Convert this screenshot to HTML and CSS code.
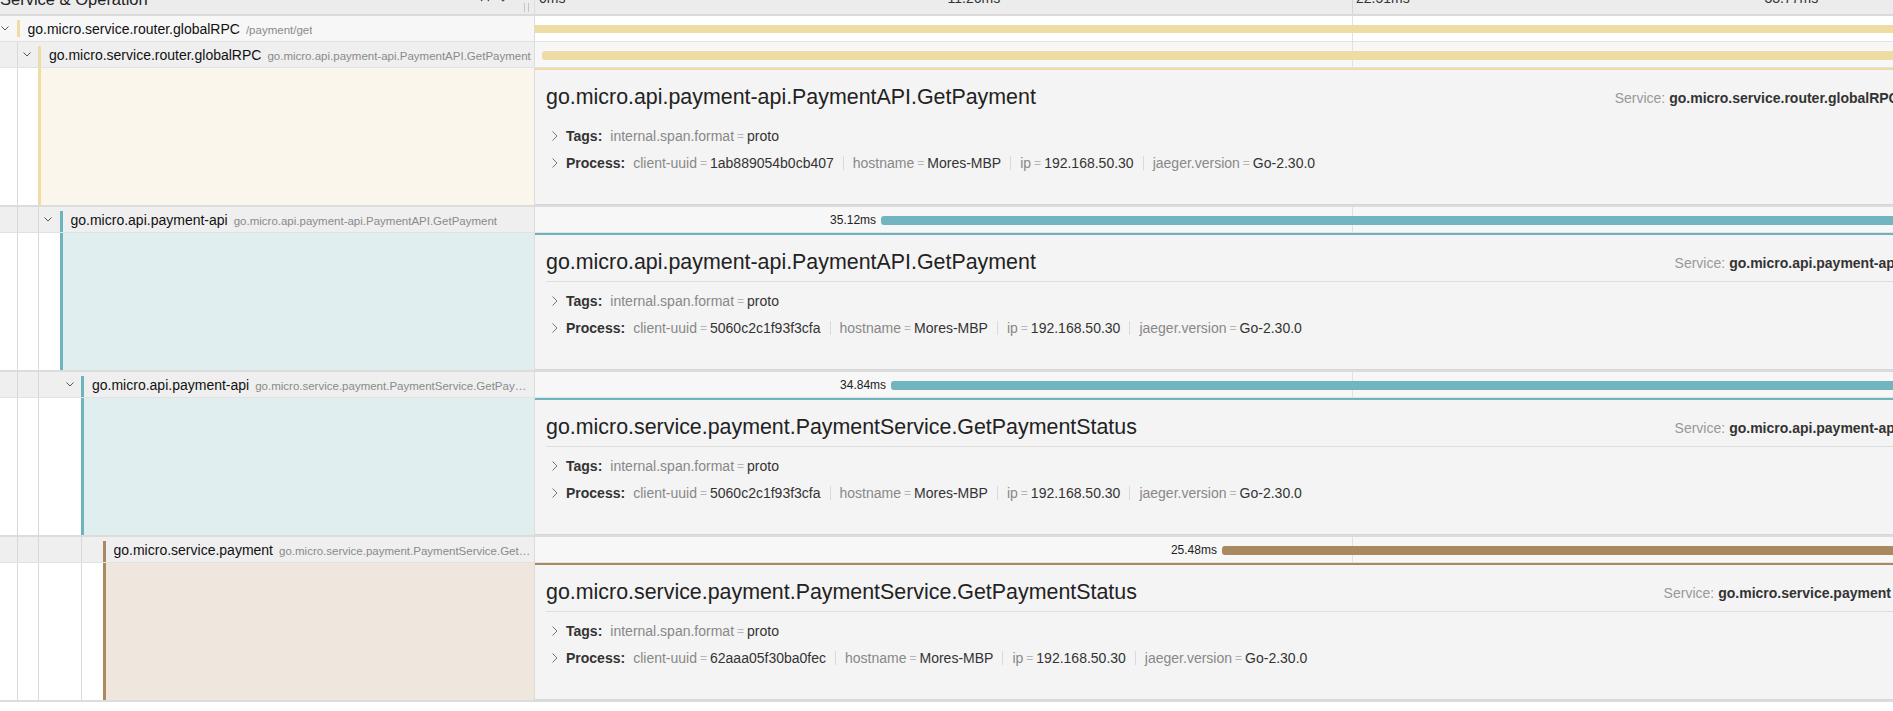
FILE: index.html
```html
<!DOCTYPE html>
<html lang="en">
<head>
<meta charset="utf-8">
<title>Trace detail</title>
<link rel="stylesheet" href="styles.css">
</head>
<body>
<div class="page">
  <div class="hdr">
    <div class="hdr-name">
      <span class="hdr-title">Service &amp; Operation</span>
      <span class="hdr-tools">
        <svg class="tool" width="10" height="12" viewBox="0 0 10 12"><path d="M1 8 L5 4 L9 8"/></svg>
        <svg class="tool" width="10" height="12" viewBox="0 0 10 12"><path d="M1 4 L5 8 L9 4"/></svg>
        <svg class="tool" width="10" height="12" viewBox="0 0 10 12"><path d="M1 6 L5 2 L9 6 M1 10 L5 6 L9 10"/></svg>
        <svg class="tool" width="10" height="12" viewBox="0 0 10 12"><path d="M1 2 L5 6 L9 2 M1 6 L5 10 L9 6"/></svg>
      </span>
      <span class="resizer"></span>
    </div>
    <div class="hdr-time">
      <span class="grid-line"></span>
      <span class="tick" style="left:0%">0ms</span>
      <span class="tick" style="left:25%">11.26ms</span>
      <span class="tick" style="left:50%">22.51ms</span>
      <span class="tick" style="left:75%">33.77ms</span>
    </div>
  </div>

  <!-- row 1 -->
  <div class="row span-row is-collapsed">
    <div class="name-cell">
      <span class="toggle"><svg class="chev" width="8" height="5" viewBox="0 0 8 5"><path d="M0.5 0.5 L4 4 L7.5 0.5"/></svg></span>
      <span class="svc c-yellow"><span class="label"><span class="svc-name">go.micro.service.router.globalRPC</span><span class="op">/payment/get</span></span></span>
    </div>
    <div class="bar-cell">
      <span class="grid-line"></span>
      <span class="bar b-yellow bar--flat" style="left:0%;width:100%"></span>
    </div>
  </div>

  <!-- row 2 -->
  <div class="row span-row">
    <div class="name-cell">
      <span class="guide on"></span>
      <span class="toggle"><svg class="chev" width="8" height="5" viewBox="0 0 8 5"><path d="M0.5 0.5 L4 4 L7.5 0.5"/></svg></span>
      <span class="svc c-yellow"><span class="label"><span class="svc-name">go.micro.service.router.globalRPC</span><span class="op">go.micro.api.payment-api.PaymentAPI.GetPayment</span></span></span>
    </div>
    <div class="bar-cell">
      <span class="grid-line"></span>
      <span class="bar b-yellow" style="left:0.43%;width:99.5%"></span>
    </div>
  </div>

  <!-- detail 1 -->
  <div class="row detail-row">
    <div class="name-cell">
      <span class="guide on"></span>
      <span class="accent-spacer"></span>
      <span class="accent-box box-yellow"></span>
    </div>
    <div class="detail-cell">
      <div class="detail-info top-yellow detail-info--plain">
        <div class="detail-head">
          <h2>go.micro.api.payment-api.PaymentAPI.GetPayment</h2>
          <ul class="overview">
            <li><span class="ov-key">Service:</span> <span class="ov-val">go.micro.service.router.globalRPC</span></li>
            <li><span class="ov-key">Duration:</span> <span class="ov-val">44.83ms</span></li>
            <li><span class="ov-key">Start Time:</span> <span class="ov-val">0.19ms</span></li>
          </ul>
        </div>
        <div class="divider"></div>
        <div class="kv">
          <svg class="kv-chev" width="6" height="10" viewBox="0 0 6 10"><path d="M0.5 0.5 L5 5 L0.5 9.5"/></svg>
          <span class="kv-label">Tags:</span>
          <span class="kv-item"><span class="k">internal.span.format</span><span class="eq">=</span><span class="v">proto</span></span>
        </div>
        <div class="kv">
          <svg class="kv-chev" width="6" height="10" viewBox="0 0 6 10"><path d="M0.5 0.5 L5 5 L0.5 9.5"/></svg>
          <span class="kv-label">Process:</span>
          <span class="kv-item"><span class="k">client-uuid</span><span class="eq">=</span><span class="v">1ab889054b0cb407</span></span>
          <span class="kv-item"><span class="k">hostname</span><span class="eq">=</span><span class="v">Mores-MBP</span></span>
          <span class="kv-item"><span class="k">ip</span><span class="eq">=</span><span class="v">192.168.50.30</span></span>
          <span class="kv-item"><span class="k">jaeger.version</span><span class="eq">=</span><span class="v">Go-2.30.0</span></span>
        </div>
      </div>
    </div>
  </div>

  <!-- row 3 -->
  <div class="row span-row">
    <div class="name-cell">
      <span class="guide on"></span>
      <span class="guide on"></span>
      <span class="toggle"><svg class="chev" width="8" height="5" viewBox="0 0 8 5"><path d="M0.5 0.5 L4 4 L7.5 0.5"/></svg></span>
      <span class="svc c-teal"><span class="label"><span class="svc-name">go.micro.api.payment-api</span><span class="op">go.micro.api.payment-api.PaymentAPI.GetPayment</span></span></span>
    </div>
    <div class="bar-cell">
      <span class="grid-line"></span>
      <span class="dur" style="right:calc(78.82% + 5px)">35.12ms</span>
      <span class="bar b-teal" style="left:21.18%;width:78.0%"></span>
    </div>
  </div>

  <!-- detail 2 -->
  <div class="row detail-row">
    <div class="name-cell">
      <span class="guide on"></span>
      <span class="guide on"></span>
      <span class="accent-spacer"></span>
      <span class="accent-box box-teal"></span>
    </div>
    <div class="detail-cell">
      <div class="detail-info top-teal">
        <div class="detail-head">
          <h2>go.micro.api.payment-api.PaymentAPI.GetPayment</h2>
          <ul class="overview">
            <li><span class="ov-key">Service:</span> <span class="ov-val">go.micro.api.payment-api</span></li>
            <li><span class="ov-key">Duration:</span> <span class="ov-val">35.12ms</span></li>
            <li><span class="ov-key">Start Time:</span> <span class="ov-val">9.53ms</span></li>
          </ul>
        </div>
        <div class="divider"></div>
        <div class="kv">
          <svg class="kv-chev" width="6" height="10" viewBox="0 0 6 10"><path d="M0.5 0.5 L5 5 L0.5 9.5"/></svg>
          <span class="kv-label">Tags:</span>
          <span class="kv-item"><span class="k">internal.span.format</span><span class="eq">=</span><span class="v">proto</span></span>
        </div>
        <div class="kv">
          <svg class="kv-chev" width="6" height="10" viewBox="0 0 6 10"><path d="M0.5 0.5 L5 5 L0.5 9.5"/></svg>
          <span class="kv-label">Process:</span>
          <span class="kv-item"><span class="k">client-uuid</span><span class="eq">=</span><span class="v">5060c2c1f93f3cfa</span></span>
          <span class="kv-item"><span class="k">hostname</span><span class="eq">=</span><span class="v">Mores-MBP</span></span>
          <span class="kv-item"><span class="k">ip</span><span class="eq">=</span><span class="v">192.168.50.30</span></span>
          <span class="kv-item"><span class="k">jaeger.version</span><span class="eq">=</span><span class="v">Go-2.30.0</span></span>
        </div>
      </div>
    </div>
  </div>

  <!-- row 4 -->
  <div class="row span-row">
    <div class="name-cell">
      <span class="guide on"></span>
      <span class="guide on"></span>
      <span class="guide"></span>
      <span class="toggle"><svg class="chev" width="8" height="5" viewBox="0 0 8 5"><path d="M0.5 0.5 L4 4 L7.5 0.5"/></svg></span>
      <span class="svc c-teal"><span class="label"><span class="svc-name">go.micro.api.payment-api</span><span class="op">go.micro.service.payment.PaymentService.GetPaymentStatus</span></span></span>
    </div>
    <div class="bar-cell">
      <span class="grid-line"></span>
      <span class="dur" style="right:calc(78.21% + 5px)">34.84ms</span>
      <span class="bar b-teal" style="left:21.79%;width:77.4%"></span>
    </div>
  </div>

  <!-- detail 3 -->
  <div class="row detail-row">
    <div class="name-cell">
      <span class="guide on"></span>
      <span class="guide on"></span>
      <span class="guide"></span>
      <span class="accent-spacer"></span>
      <span class="accent-box box-teal"></span>
    </div>
    <div class="detail-cell">
      <div class="detail-info top-teal">
        <div class="detail-head">
          <h2>go.micro.service.payment.PaymentService.GetPaymentStatus</h2>
          <ul class="overview">
            <li><span class="ov-key">Service:</span> <span class="ov-val">go.micro.api.payment-api</span></li>
            <li><span class="ov-key">Duration:</span> <span class="ov-val">34.84ms</span></li>
            <li><span class="ov-key">Start Time:</span> <span class="ov-val">9.81ms</span></li>
          </ul>
        </div>
        <div class="divider"></div>
        <div class="kv">
          <svg class="kv-chev" width="6" height="10" viewBox="0 0 6 10"><path d="M0.5 0.5 L5 5 L0.5 9.5"/></svg>
          <span class="kv-label">Tags:</span>
          <span class="kv-item"><span class="k">internal.span.format</span><span class="eq">=</span><span class="v">proto</span></span>
        </div>
        <div class="kv">
          <svg class="kv-chev" width="6" height="10" viewBox="0 0 6 10"><path d="M0.5 0.5 L5 5 L0.5 9.5"/></svg>
          <span class="kv-label">Process:</span>
          <span class="kv-item"><span class="k">client-uuid</span><span class="eq">=</span><span class="v">5060c2c1f93f3cfa</span></span>
          <span class="kv-item"><span class="k">hostname</span><span class="eq">=</span><span class="v">Mores-MBP</span></span>
          <span class="kv-item"><span class="k">ip</span><span class="eq">=</span><span class="v">192.168.50.30</span></span>
          <span class="kv-item"><span class="k">jaeger.version</span><span class="eq">=</span><span class="v">Go-2.30.0</span></span>
        </div>
      </div>
    </div>
  </div>

  <!-- row 5 -->
  <div class="row span-row">
    <div class="name-cell">
      <span class="guide on"></span>
      <span class="guide on"></span>
      <span class="guide"></span>
      <span class="guide on"></span>
      <span class="toggle"></span>
      <span class="svc c-brown"><span class="label"><span class="svc-name">go.micro.service.payment</span><span class="op">go.micro.service.payment.PaymentService.GetPaymentStatus</span></span></span>
    </div>
    <div class="bar-cell">
      <span class="grid-line"></span>
      <span class="dur" style="right:calc(57.96% + 5px)">25.48ms</span>
      <span class="bar b-brown" style="left:42.04%;width:56.6%"></span>
    </div>
  </div>

  <!-- detail 4 -->
  <div class="row detail-row">
    <div class="name-cell">
      <span class="guide on"></span>
      <span class="guide on"></span>
      <span class="guide"></span>
      <span class="guide on"></span>
      <span class="accent-spacer"></span>
      <span class="accent-box box-brown"></span>
    </div>
    <div class="detail-cell">
      <div class="detail-info top-brown">
        <div class="detail-head">
          <h2>go.micro.service.payment.PaymentService.GetPaymentStatus</h2>
          <ul class="overview">
            <li><span class="ov-key">Service:</span> <span class="ov-val">go.micro.service.payment</span></li>
            <li><span class="ov-key">Duration:</span> <span class="ov-val">25.48ms</span></li>
            <li><span class="ov-key">Start Time:</span> <span class="ov-val">18.93ms</span></li>
          </ul>
        </div>
        <div class="divider"></div>
        <div class="kv">
          <svg class="kv-chev" width="6" height="10" viewBox="0 0 6 10"><path d="M0.5 0.5 L5 5 L0.5 9.5"/></svg>
          <span class="kv-label">Tags:</span>
          <span class="kv-item"><span class="k">internal.span.format</span><span class="eq">=</span><span class="v">proto</span></span>
        </div>
        <div class="kv">
          <svg class="kv-chev" width="6" height="10" viewBox="0 0 6 10"><path d="M0.5 0.5 L5 5 L0.5 9.5"/></svg>
          <span class="kv-label">Process:</span>
          <span class="kv-item"><span class="k">client-uuid</span><span class="eq">=</span><span class="v">62aaa05f30ba0fec</span></span>
          <span class="kv-item"><span class="k">hostname</span><span class="eq">=</span><span class="v">Mores-MBP</span></span>
          <span class="kv-item"><span class="k">ip</span><span class="eq">=</span><span class="v">192.168.50.30</span></span>
          <span class="kv-item"><span class="k">jaeger.version</span><span class="eq">=</span><span class="v">Go-2.30.0</span></span>
        </div>
      </div>
    </div>
  </div>
</div>
</body>
</html>
```

FILE: styles.css
```css
html, body {
  margin: 0;
  padding: 0;
  overflow: hidden;
  background: #fff;
}

.page {
  width: 2169px;
  font-family: "Liberation Sans", Arial, Helvetica, sans-serif;
  color: #222;
}

/* ---------- header ---------- */
.hdr {
  display: flex;
  height: 14px;
  background: #ececec;
  border-bottom: 2px solid #dadada;
  overflow: hidden;
}

.hdr-name {
  width: 535px;
  flex: none;
  position: relative;
  display: flex;
  box-sizing: border-box;
  border-right: 1px solid #dcdcdc;
}

.hdr-title {
  display: block;
  flex: 1;
  font-size: 16.5px;
  line-height: 16px;
  margin-top: -9px;
  color: #222;
}

.hdr-tools {
  display: flex;
  gap: 8px;
  margin-top: -9px;
  margin-right: 26px;
  height: 12px;
}

.tool path {
  fill: none;
  stroke: #555;
  stroke-width: 1.2;
}

.resizer {
  position: absolute;
  right: 5px;
  top: 3px;
  width: 3px;
  height: 9px;
  border-left: 1px solid #c4c4c4;
  border-right: 1px solid #c4c4c4;
}

.hdr-time {
  flex: 1;
  position: relative;
}

.tick {
  position: absolute;
  top: -9px;
  padding-left: 4px;
  font-size: 14px;
  line-height: 14px;
  color: #333;
  white-space: nowrap;
}

/* ---------- rows ---------- */
.row {
  display: flex;
  box-sizing: border-box;
}

.span-row {
  height: 26px;
  border-bottom: 1px solid #e2e2e2;
}

.detail-row {
  height: 139px;
  border-bottom: 2px solid #dcdcdc;
}

.name-cell {
  width: 535px;
  flex: none;
  display: flex;
  box-sizing: border-box;
  border-right: 1px solid #dcdcdc;
}

.span-row .name-cell {
  background: #efefef;
}

.span-row.is-collapsed .name-cell {
  background: #f7f7f7;
}

.detail-row .name-cell {
  background: #fff;
}

.guide {
  width: 21.5px;
  flex: none;
  display: flex;
}

.guide.on::before {
  content: "";
  width: 1px;
  margin-left: 16.5px;
  background: #d9d9d9;
}

.toggle {
  width: 16.5px;
  flex: none;
  display: flex;
  align-items: center;
  padding-left: 1px;
  box-sizing: border-box;
}

.chev path {
  fill: none;
  stroke: #555;
  stroke-width: 1;
}

.svc {
  flex: 1;
  min-width: 0;
  display: flex;
  align-items: center;
  border-left: 3px solid;
  margin-top: 4px;
  padding: 0 2px 4px 8px;
}

.is-collapsed .svc {
  margin-bottom: 4px;
  padding-bottom: 0;
}

.label {
  overflow: hidden;
  white-space: nowrap;
  text-overflow: ellipsis;
  color: #888;
  font-size: 11.5px;
}

.svc-name {
  font-size: 14px;
  color: #111;
}

.op {
  font-size: 11.5px;
  color: #8a8a8a;
  margin-left: 6px;
}

.c-yellow { border-color: #efdba3; }
.c-teal { border-color: #6db4bd; }
.c-brown { border-color: #a98a60; }

/* timeline */
.bar-cell {
  flex: 1;
  position: relative;
  background: #f7f7f7;
}

.is-collapsed .bar-cell {
  background: #fff;
}

.grid-line {
  position: absolute;
  left: 50%;
  top: 0;
  bottom: 0;
  width: 1px;
  background: #e2e2e2;
}

.hdr-time .grid-line {
  background: #d6d6d6;
}

.bar {
  position: absolute;
  top: 9px;
  height: 9px;
  border-radius: 3px;
}

.bar--flat {
  border-radius: 0;
  top: 9px;
  height: 8px;
}

.b-yellow { background: #efdca5; }
.b-teal { background: #70b5bf; }
.b-brown { background: #ab8960; }

.dur {
  position: absolute;
  top: 0;
  line-height: 26px;
  font-size: 12px;
  color: #222;
  white-space: nowrap;
}

/* ---------- detail ---------- */
.accent-spacer {
  width: 16.5px;
  flex: none;
}

.accent-box {
  flex: 1;
  border-left: 3px solid transparent;
}

.accent-box.box-yellow { border-left-color: #efdba3; background: #fbf6eb; }
.accent-box.box-teal { border-left-color: #6db4bd; background: #e1eef0; }
.accent-box.box-brown { border-left-color: #a98a60; background: #efe6dd; }

.detail-cell {
  flex: 1;
  display: flex;
}

.detail-info {
  flex: 1;
  background: #f4f4f4;
  border-top: 2px solid;
  border-bottom: 1px solid #d6d6d6;
  padding: 12px 1px 0 11px;
}

.top-yellow { border-top-color: #efdba3; }
.top-teal { border-top-color: #6db4bd; }
.top-brown { border-top-color: #a98a60; }

.detail-head {
  display: flex;
  align-items: center;
  height: 31px;
}

.detail-head h2 {
  flex: 1;
  margin: 0;
  font-size: 21.4px;
  font-weight: normal;
  color: #222;
  white-space: nowrap;
}

.overview {
  display: flex;
  align-items: center;
  list-style: none;
  margin: 0;
  padding: 0;
  font-size: 14px;
  white-space: nowrap;
}

.overview li {
  display: flex;
  align-items: center;
}

.overview li + li::before {
  content: "";
  width: 1px;
  height: 14px;
  background: #d0d0d0;
  margin: 0 8px;
}

.ov-key {
  color: #999;
  margin-right: 4px;
}

.ov-val {
  font-weight: bold;
  color: #333;
}

.divider {
  height: 1px;
  background: #dedede;
  margin: 3px 0 5px;
}

.detail-info--plain .divider {
  background: transparent;
}

.kv {
  display: flex;
  align-items: center;
  height: 27px;
  padding-left: 6px;
  font-size: 14px;
  white-space: nowrap;
}

.kv-chev {
  flex: none;
}

.kv-chev path {
  fill: none;
  stroke: #777;
  stroke-width: 1;
}

.kv-label {
  font-weight: bold;
  color: #333;
  margin-left: 8px;
  margin-right: 8px;
}

.kv-item {
  display: flex;
  align-items: center;
}

.kv-item + .kv-item::before {
  content: "";
  width: 1px;
  height: 14px;
  background: #dadada;
  margin: 0 9px;
}

.k {
  color: #888;
}

.eq {
  color: #b5b5b5;
  font-size: 12px;
  margin: 0 3px;
}

.v {
  color: #333;
}
```
